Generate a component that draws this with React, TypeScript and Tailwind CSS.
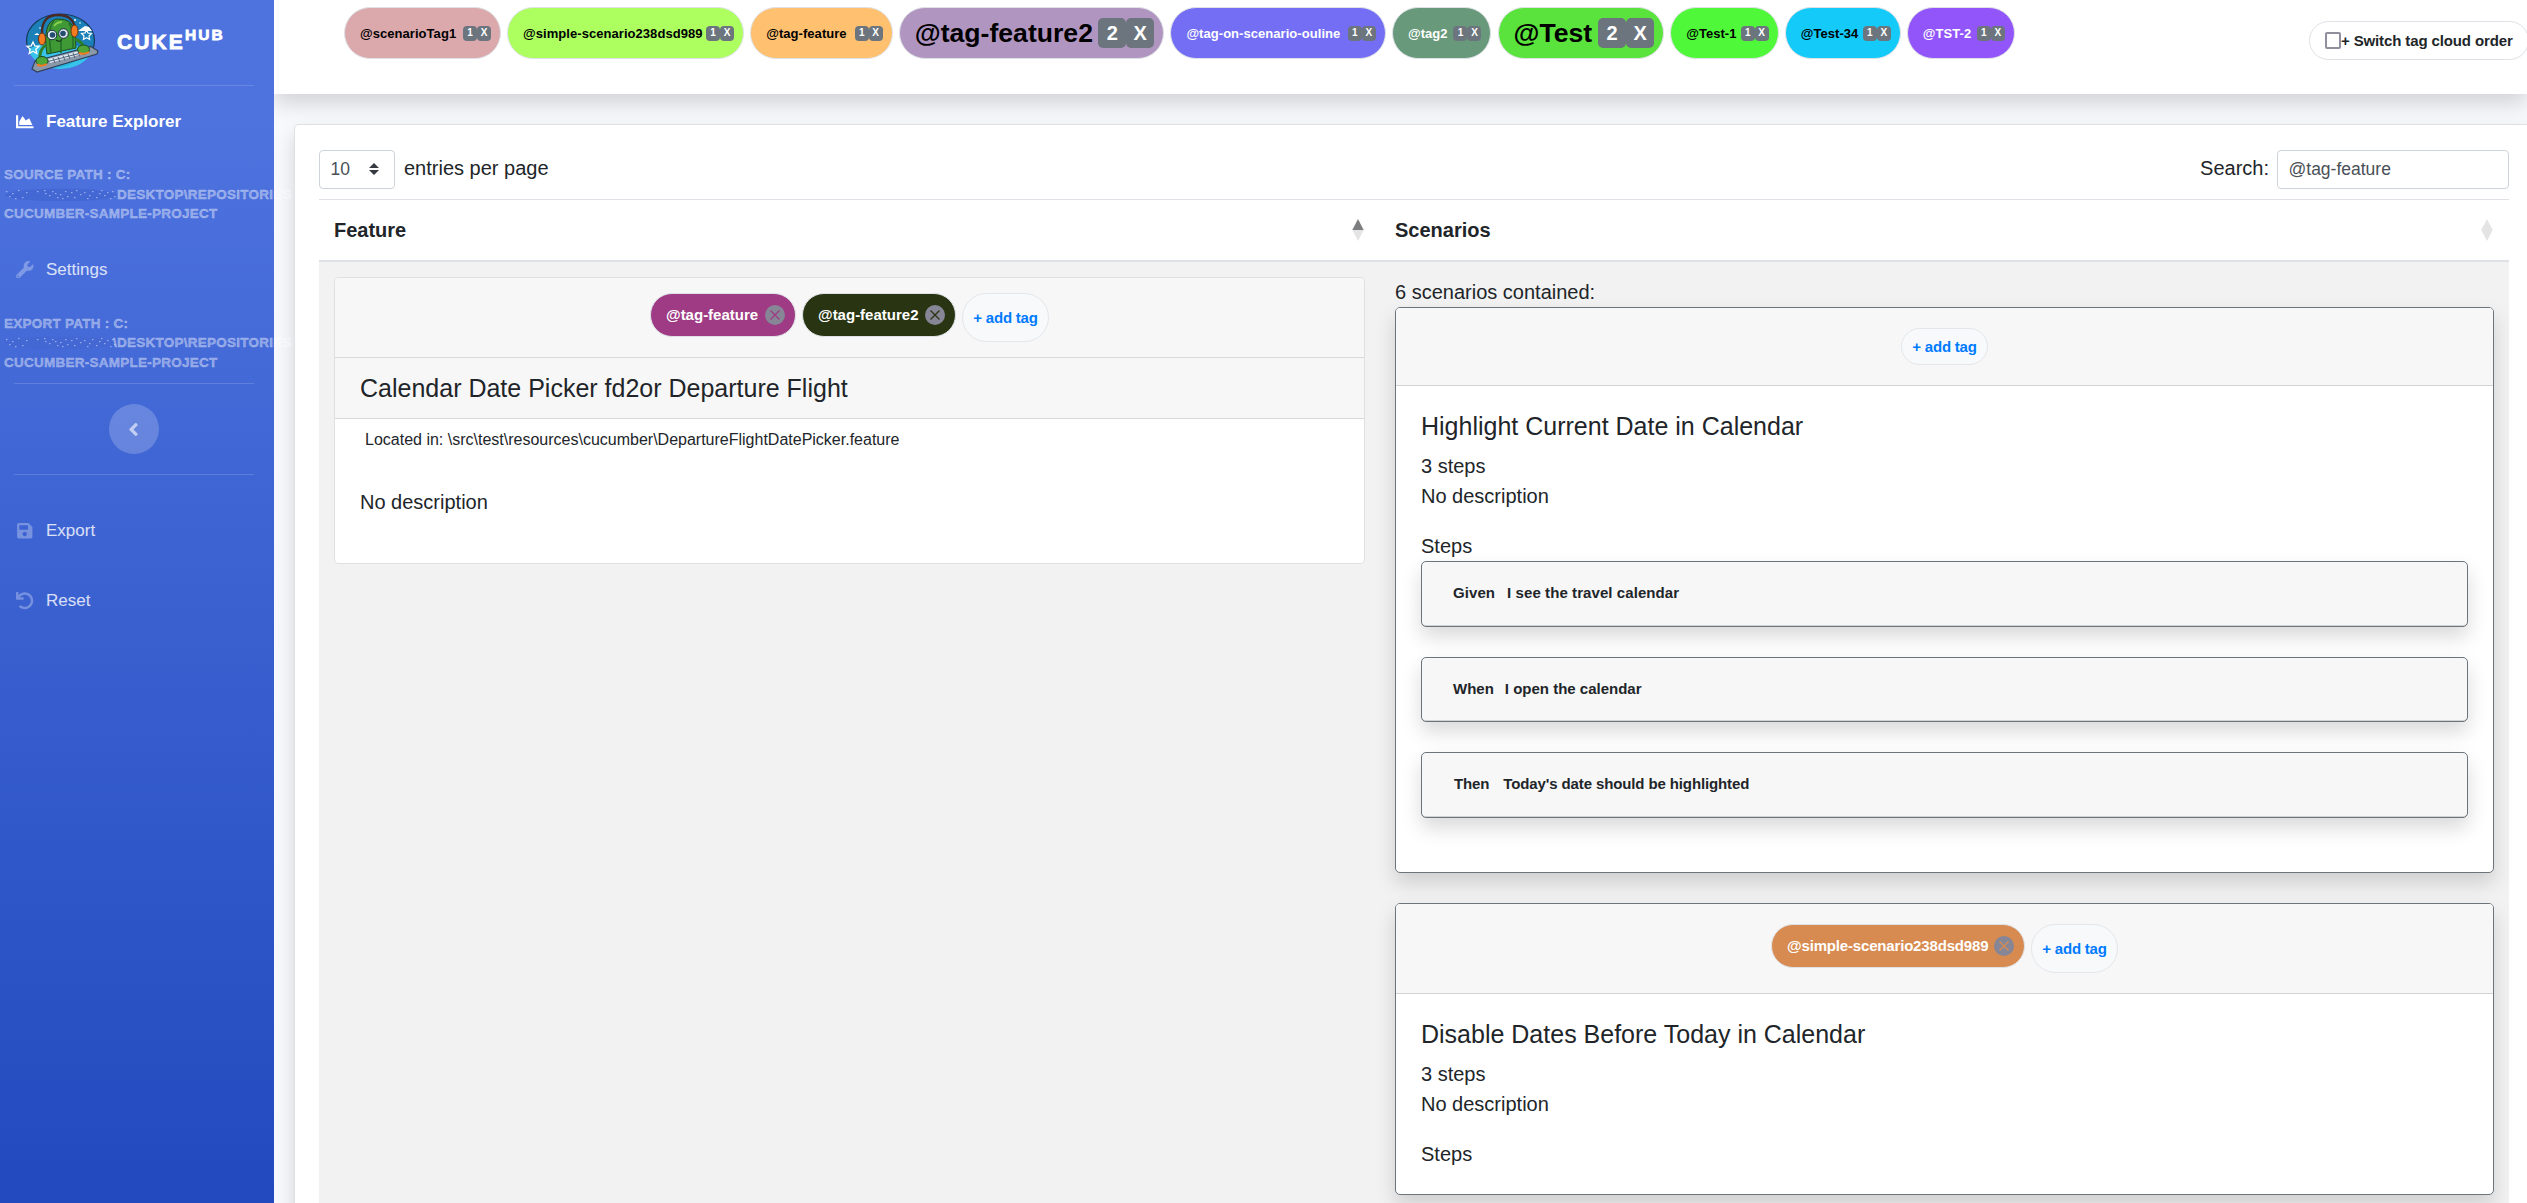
import React from 'react';
import { FaChartArea, FaWrench, FaSave, FaUndo, FaAngleLeft } from 'react-icons/fa';

type CloudTag = { name: string; count: number; pill: string; big?: boolean };

const cloud: CloudTag[] = [
  { name: '@scenarioTag1', count: 1, pill: 'w-[157px] bg-[#dba8ab] text-black' },
  { name: '@simple-scenario238dsd989', count: 1, pill: 'w-[237px] bg-[#adff60] text-black' },
  { name: '@tag-feature', count: 1, pill: 'w-[142.5px] bg-[#ffc070] text-black' },
  { name: '@tag-feature2', count: 2, pill: 'w-[265.5px] bg-[#b195c1] text-black', big: true },
  { name: '@tag-on-scenario-ouline', count: 1, pill: 'w-[215.5px] bg-[#746ef5] text-white' },
  { name: '@tag2', count: 1, pill: 'w-[99.5px] bg-[#68997a] text-white' },
  { name: '@Test', count: 2, pill: 'w-[166.5px] bg-[#5ae33c] text-black', big: true },
  { name: '@Test-1', count: 1, pill: 'w-[108.5px] bg-[#4ff93a] text-black' },
  { name: '@Test-34', count: 1, pill: 'w-[116px] bg-[#14caf9] text-black' },
  { name: '@TST-2', count: 1, pill: 'w-[108px] bg-[#9155f9] text-white' },
];

function CloudPill({ tag }: { tag: CloudTag }) {
  const badge = tag.big
    ? 'flex h-[30px] items-center justify-center rounded-[5px] bg-[#6c757d] text-[20px] text-white w-[28px]'
    : 'flex h-[15px] w-[14px] items-center justify-center rounded-[4px] bg-[#6c757d] text-[10px] text-white';
  return (
    <div
      className={`flex h-[52px] shrink-0 items-center justify-between rounded-full border border-[#dee2e6] pr-[9px] pl-[15px] font-bold whitespace-nowrap ${tag.pill}`}
    >
      <span className={tag.big ? 'text-[26.6px] leading-none' : 'text-[13px] leading-none tracking-[0.05px]'}>{tag.name}</span>
      <span className="flex">
        <span className={badge}>{tag.count}</span>
        <span className={badge}>X</span>
      </span>
    </div>
  );
}

function Mascot() {
  return (
    <svg width="74" height="60" viewBox="0 0 74 60" className="shrink-0">
      <ellipse cx="35.500" cy="27.500" rx="34" ry="26.500" fill="#1b7fb8" stroke="#173a5c" strokeWidth="1.200" />
      <path d="M3 36a33 25 0 0 0 62 6L48 30H18z" fill="#38c3ea" />
      <path d="M10 50q12 -6 46 -6q-14 12 -28 10z" fill="#22b8e0" />
      <g fill="#fff">
        <path d="M57 15l3 -2 4 1 3 4H53z" />
        <path d="M9 22l3-2 3 2z" />
        <circle cx="50" cy="7" r="1" />
        <circle cx="15" cy="15" r=".8" />
        <circle cx="55" cy="10" r=".8" />
      </g>
      <path d="M8 29l1.800 4 4.200.3-3.200 2.900 1 4.300L8 38.200l-3.800 2.300 1-4.300L2 33.300l4.200-.3z" fill="none" stroke="#fff" strokeWidth="1.300" />
      <path d="M61.500 17l1.500 3 3.500.4-2.500 2.600.6 3.500-3.100-1.700-3.100 1.700.6-3.500-2.500-2.600 3.500-.4z" fill="none" stroke="#fff" strokeWidth="1.200" />
      <path d="M17 22q-1-20 16-20t17 16" fill="none" stroke="#4a2a25" strokeWidth="2.400" />
      <path d="M22 41Q17 8 32 6q16-1 18 14l1 15z" fill="#3f9a35" stroke="#1d4a20" strokeWidth="1" />
      <path d="M26 40Q22 14 29 8M44 10q5 8 4 26M36 28v12" fill="none" stroke="#256e2a" strokeWidth="1.600" />
      <path d="M29 13q3-4 8-4" fill="none" stroke="#86cf4f" strokeWidth="1.800" />
      <ellipse cx="17" cy="26" rx="3.500" ry="6" fill="#f57b20" stroke="#6f3517" strokeWidth="1" />
      <ellipse cx="49.500" cy="18" rx="3.500" ry="6" fill="#f57b20" stroke="#6f3517" strokeWidth="1" />
      <circle cx="27" cy="22" r="4.800" fill="#dfe8ef" stroke="#162b3c" strokeWidth="1" />
      <circle cx="38.500" cy="20.500" r="4.800" fill="#dfe8ef" stroke="#162b3c" strokeWidth="1" />
      <circle cx="27.500" cy="22" r="2.800" fill="#244b70" />
      <circle cx="38" cy="20.500" r="2.800" fill="#244b70" />
      <path d="M31 27q4 3 6-1" fill="none" stroke="#14351a" strokeWidth="1.200" />
      <path d="M21 32q-7 4-6 15M50 26q8 3 9 10" fill="none" stroke="#2d7f2c" strokeWidth="3" />
      <path d="M10 48L66 33.500l7 4.500-1 3L12 59l-5-3z" fill="#8a98aa" stroke="#2f4058" strokeWidth="1.200" />
      <path d="M23 46l35-9 3 3-36 10z" fill="#dce6ee" />
      <path d="M23 48.500l37-9.500M28 45l2 5M33 44l2 5M38 42.500l2 5M43 41l2 5M48 40l2 5M53 38.500l2 5" stroke="#53647c" strokeWidth="1" />
      <ellipse cx="17" cy="48" rx="6" ry="4.500" fill="#4ea538" stroke="#1d4a20" strokeWidth="1" />
      <ellipse cx="58.500" cy="36.500" rx="6" ry="4.500" fill="#4ea538" stroke="#1d4a20" strokeWidth="1" />
      <path d="M12 51.500q5 2.500 10-.5M54 40q5 2 10-1" fill="none" stroke="#f57b20" strokeWidth="2" />
    </svg>
  );
}

const specks = [
  2, 3, 5, 8, 8, 5, 11, 10, 14, 2, 18, 9, 22, 4, 33, 3, 40, 2, 41, 5, 45, 7, 48, 3, 51, 5, 53, 9, 56, 6, 58, 10, 61, 3, 63, 8, 67, 4, 70, 9, 72, 2, 76, 6, 80, 4, 83, 10,
  85, 7, 88, 3, 92, 9, 95, 5, 97, 2, 100, 7, 103, 4, 106, 10, 108, 3, 110, 8,
];

function Redaction() {
  return (
    <svg width="113" height="13" viewBox="0 0 113 13" className="shrink-0">
      <ellipse cx="57" cy="7" rx="56" ry="6.500" fill="#4468d3" />
      {specks.map((x, i) =>
        i % 2 === 0 ? <rect key={i} x={x} y={specks[i + 1]} width="1.500" height="1.200" fill="#98ace9" /> : null,
      )}
    </svg>
  );
}

function PathLabel({ label, tail, tailClass }: { label: string; tail: string; tailClass: string }) {
  return (
    <div className="h-[58.500px] pl-[4px] text-[13.500px] leading-[19.500px] font-bold tracking-[0.250px] whitespace-nowrap text-white/40 [-webkit-text-stroke:0.400px]">
      <div>{label}</div>
      <div className="flex items-center">
        <Redaction />
        <span className={tailClass}>{tail}</span>
      </div>
      <div>CUCUMBER-SAMPLE-PROJECT</div>
    </div>
  );
}

function NavItem({ icon, label, active }: { icon: React.ReactNode; label: string; active?: boolean }) {
  return (
    <div className={`flex h-[20px] items-center pl-[16px] text-[17px] ${active ? 'font-bold text-white' : 'text-white/80'}`}>
      <span className={`flex w-[30px] text-[17.500px] ${active ? 'text-white' : 'text-white/30'}`}>{icon}</span>
      {label}
    </div>
  );
}

function Sidebar() {
  return (
    <aside className="relative z-10 h-[1203px] w-[274px] shrink-0 bg-[linear-gradient(180deg,#4e73df_10%,#224abe_100%)]">
      <div className="flex h-[85px] items-start pt-[13px] pl-[25px] text-white">
        <Mascot />
        <div className="mt-[13px] ml-[18px] flex items-start text-[21px] leading-[32px] font-bold tracking-[2.100px] [-webkit-text-stroke:0.800px]">
          CUKE<span className="mt-[-7px] text-[15.500px]">HUB</span>
        </div>
      </div>
      <hr className="mr-[20px] ml-[14px] border-white/15" />
      <div className="mt-[26px]">
        <NavItem icon={<FaChartArea />} label="Feature Explorer" active />
      </div>
      <div className="mt-[33px]">
        <PathLabel label="SOURCE PATH : C:" tail="DESKTOP\REPOSITORIES" tailClass="" />
      </div>
      <div className="mt-[36px]">
        <NavItem icon={<FaWrench />} label="Settings" />
      </div>
      <div className="mt-[34px]">
        <PathLabel label="EXPORT PATH : C:" tail="\DESKTOP\REPOSITORIES" tailClass="ml-[-4px]" />
      </div>
      <hr className="mt-[11px] mr-[20px] ml-[14px] border-white/15" />
      <div className="mt-[20px] ml-[109px] flex h-[50px] w-[50px] items-center justify-center rounded-full bg-white/20 pr-[2px] text-[21px] text-white/60">
        <FaAngleLeft />
      </div>
      <hr className="mt-[20px] mr-[20px] ml-[14px] border-white/15" />
      <div className="mt-[46px]">
        <NavItem icon={<FaSave />} label="Export" />
      </div>
      <div className="mt-[50px]">
        <NavItem icon={<FaUndo />} label="Reset" />
      </div>
    </aside>
  );
}

function SortIcon({ asc }: { asc?: boolean }) {
  return (
    <svg width="12" height="22" viewBox="0 0 12 22">
      <path d="M6 0L11.700 11H.3z" fill={asc ? '#7c7e80' : '#e4e4e4'} />
      <path d="M6 22L11.700 11H.3z" fill="#e4e4e4" />
    </svg>
  );
}

function TagPill({ name, className, cross }: { name: string; className: string; cross: string }) {
  return (
    <div className={`flex h-[44px] items-center justify-between rounded-full border border-[#dee2e6] pr-[10px] pl-[15px] text-[15px] font-bold text-white ${className}`}>
      {name}
      <svg width="20" height="20" viewBox="0 0 20 20" className="shrink-0">
        <circle cx="10" cy="10" r="10" fill="#868696" />
        <path d="M5.500 5.500l9 9M14.500 5.500l-9 9" stroke={cross} strokeWidth="1.300" />
      </svg>
    </div>
  );
}

function AddTag({ className }: { className: string }) {
  return (
    <div
      className={`flex w-[87px] items-center justify-center rounded-[25px] border border-[#e3e6ea] bg-[#f8f9fa] text-[15px] font-bold tracking-[-0.200px] text-[#007bff] ${className}`}
    >
      + add tag
    </div>
  );
}

function Step({ keyword, text, rowClass }: { keyword: string; text: string; rowClass: string }) {
  return (
    <div className="mb-[30px] h-[65.500px] rounded-[5px] border border-[#6c757d] bg-[#f7f7f7] shadow-[0_10px_20px_rgba(0,0,0,0.15)]">
      <div className={`flex h-full items-center rounded-[4px] border-b border-black/15 text-[15px] font-bold ${rowClass}`}>
        <span>{keyword}</span>
        <span>{text}</span>
      </div>
    </div>
  );
}

function ScenarioCard({
  tags,
  headerClass,
  title,
  className,
  children,
}: {
  tags: React.ReactNode;
  headerClass: string;
  title: string;
  className: string;
  children?: React.ReactNode;
}) {
  return (
    <div className={`mb-[30px] rounded-[5px] border border-[#6c757d] bg-white shadow-[0_10px_20px_rgba(0,0,0,0.15)] ${className}`}>
      <div className={`flex items-start justify-center rounded-t-[4px] border-b border-black/15 bg-[#f7f7f7] ${headerClass}`}>{tags}</div>
      <div className="p-[25px]">
        <h5 className="mb-[10px] text-[25px] leading-[30px]">{title}</h5>
        <div>3 steps</div>
        <div>No description</div>
        <div className="mt-[20px]">Steps</div>
        {children}
      </div>
    </div>
  );
}

export default function App() {
  return (
    <div className="flex h-[1203px] w-[2527px] overflow-hidden bg-[#f8f9fc] font-['Liberation_Sans',Arial,sans-serif] text-[20px] leading-[30px] text-[#212529]">
      <Sidebar />
      <div className="flex h-full min-w-0 flex-1 flex-col">
        <header className="flex h-[94px] w-[2253px] shrink-0 bg-white pt-[7px] pl-[70px] shadow-[0_10px_20px_rgba(0,0,0,0.15)]">
          <div className="flex w-[1965px] shrink-0 gap-[6.100px]">
            {cloud.map((t) => (
              <CloudPill key={t.name} tag={t} />
            ))}
          </div>
          <div className="mt-[14px] flex h-[39px] w-[220px] shrink-0 items-center rounded-full border border-[#dee2e6] pl-[15px] text-[15px] font-bold tracking-[-0.120px] whitespace-nowrap">
            <span className="h-[17px] w-[16px] rounded-[2px] border-2 border-[#8f8f9d] bg-white" />
            <span className="mr-[4px]">+</span>
            <span>Switch tag cloud order</span>
          </div>
        </header>

        <main className="mt-[30px] ml-[20px] flex h-[1300px] w-[2240px] shrink-0 flex-col rounded-[5px] border border-black/12 bg-white pt-[25px] pl-[24px] shadow-[0_10px_20px_rgba(0,0,0,0.15)]">
          <div className="flex h-[39px] w-[2190px] items-center">
            <div className="flex h-[39px] w-[76px] items-center justify-between rounded-[4px] border border-[#ced4da] pr-[15px] pb-[1px] pl-[10.500px] text-[17.500px] text-[#495057]">
              10
              <svg width="10" height="12" viewBox="0 0 10 12" fill="#343a40">
                <path d="M5 0l5 5H0zM5 12l5-5H0z" />
              </svg>
            </div>
            <span className="mb-[3px] ml-[9px]">entries per page</span>
            <span className="mr-[8px] mb-[3px] ml-auto">Search:</span>
            <div className="flex h-[39px] w-[232px] items-center rounded-[4px] border border-[#ced4da] pb-[1px] pl-[10.500px] text-[17.500px] text-[#495057]">
              @tag-feature
            </div>
          </div>

          <div className="mt-[10px] grid w-[2190px] grid-cols-[1061px_1129px] border-t border-b-2 border-[#dee2e6] font-bold">
            <div className="flex h-[60px] items-center justify-between pr-[16px] pl-[15px]">
              Feature
              <SortIcon asc />
            </div>
            <div className="flex h-[60px] items-center justify-between pr-[16px] pl-[15px]">
              Scenarios
              <SortIcon />
            </div>
          </div>

          <div className="grid w-[2190px] flex-1 grid-cols-[1061px_1129px] bg-[#f2f2f2] pt-[15px]">
            <div className="px-[15px]">
              <div className="h-[287px] rounded-[5px] border border-black/12 bg-white">
                <div className="flex h-[80px] items-start justify-center gap-[6px] rounded-t-[4px] border-b border-black/12 bg-[#f7f7f7] pt-[15px]">
                  <TagPill name="@tag-feature" className="w-[146px] bg-[#9e3b84]" cross="#9e3b84" />
                  <TagPill name="@tag-feature2" className="w-[154px] bg-[#293512]" cross="#293512" />
                  <AddTag className="h-[49px]" />
                </div>
                <h5 className="flex h-[61px] items-center border-b border-black/12 bg-[#f7f7f7] pl-[25px] text-[25px] leading-[30px]">
                  Calendar Date Picker fd2or Departure Flight
                </h5>
                <div className="mt-[9px] pl-[30px] text-[16px] leading-[24px]">
                  Located in: \src\test\resources\cucumber\DepartureFlightDatePicker.feature
                </div>
                <div className="mt-[35px] pl-[25px]">No description</div>
              </div>
            </div>

            <div className="px-[15px]">
              <div>6 scenarios contained:</div>
              <ScenarioCard className="h-[566px]" headerClass="h-[78px] pt-[20px]" title="Highlight Current Date in Calendar" tags={<AddTag className="h-[37px]" />}>
                <Step keyword="Given" text="I see the travel calendar" rowClass="gap-[12px] pl-[31px] tracking-[0.080px]" />
                <Step keyword="When" text="I open the calendar" rowClass="gap-[11px] pl-[31px]" />
                <Step keyword="Then" text="Today's date should be highlighted" rowClass="gap-[14px] pl-[32px] tracking-[-0.120px]" />
              </ScenarioCard>
              <ScenarioCard
                className="h-[292px]"
                headerClass="h-[90px] gap-[6px] pt-[20px]"
                title="Disable Dates Before Today in Calendar"
                tags={
                  <>
                    <TagPill name="@simple-scenario238dsd989" className="w-[254px] bg-[#d88b50] tracking-[-0.170px]" cross="#d88b50" />
                    <AddTag className="h-[49px]" />
                  </>
                }
              />
            </div>
          </div>
        </main>
      </div>
    </div>
  );
}
